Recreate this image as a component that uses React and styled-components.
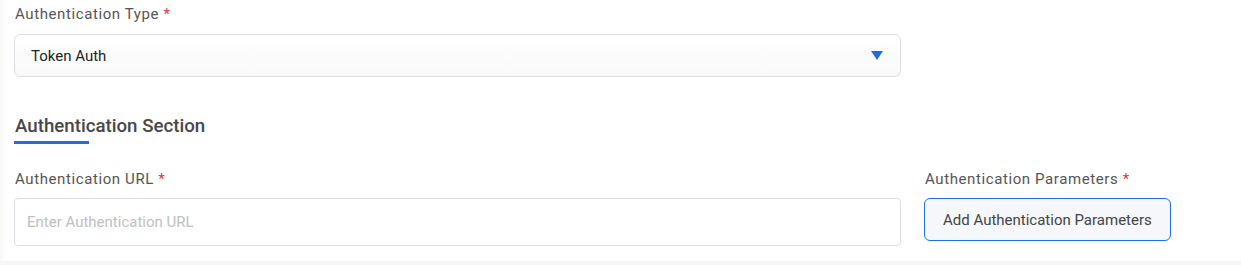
import React from 'react';
import styled, { createGlobalStyle } from 'styled-components';

const GlobalStyle = createGlobalStyle`
  html, body {
    margin: 0;
    padding: 0;
    background: #f6f6f6;
    font-family: Roboto, "Liberation Sans", sans-serif;
  }
`;

const Card = styled.div`
  background: #fff;
  height: 261px;
  box-sizing: border-box;
  padding: 4px 0 0 14px;
  box-shadow: inset 4px 0 4px -2px rgba(0, 0, 0, 0.04);
`;

const Field = styled.div`
  display: flex;
  flex-direction: column;
  width: ${(p) => p.width || 'auto'};
`;

const Label = styled.label`
  font-size: 15px;
  color: #555;
  letter-spacing: 0.6px;
  line-height: 20px;
  padding-left: 1px;
  margin-bottom: ${(p) => p.$gap || 10}px;

  span {
    color: #e03b3b;
  }
`;

const Select = styled.div`
  height: 43px;
  box-sizing: border-box;
  border: 1px solid #dcdfe4;
  border-radius: 6px;
  background: linear-gradient(180deg, #fff 0%, #f9f9f9 100%);
  display: flex;
  align-items: center;
  justify-content: space-between;
  padding: 0 17px 0 16px;
  font-size: 15px;
  color: #222;
`;

const Arrow = styled.svg`
  width: 12px;
  height: 9px;
`;

const Section = styled.div`
  margin-top: 37px;
`;

const SectionTitle = styled.h3`
  margin: 0;
  font-size: 18.7px;
  font-weight: 500;
  color: #474747;
  line-height: 24px;
  padding-left: 1px;
`;

const Underline = styled.div`
  width: 75px;
  height: 3px;
  background: #1f6fe0;
  margin-top: 3px;
`;

const Row = styled.div`
  display: grid;
  grid-template-columns: 887px 1fr;
  column-gap: 23px;
  margin-top: 25px;
`;

const Input = styled.input`
  height: 48px;
  box-sizing: border-box;
  border: 1px solid #dcdfe4;
  border-radius: 4px;
  padding: 0 12px;
  font-family: inherit;
  font-size: 15px;
  color: #222;
  outline: none;

  &::placeholder {
    color: #c0c0c0;
  }
`;

const Button = styled.button`
  align-self: flex-start;
  height: 43px;
  padding: 0 18px;
  border: 1px solid #1f6fe0;
  border-radius: 6px;
  background: #f5f7fa;
  font-family: inherit;
  font-size: 15px;
  color: #444;
  cursor: pointer;
`;

export default function App() {
  return (
    <>
      <GlobalStyle />
      <Card>
        <Field width="887px">
          <Label>
            Authentication Type <span>*</span>
          </Label>
          <Select>
            Token Auth
            <Arrow viewBox="0 0 12 9">
              <path d="M0 0 H12 L6 9 Z" fill="#1a6ee8" />
            </Arrow>
          </Select>
        </Field>
        <Section>
          <SectionTitle>Authentication Section</SectionTitle>
          <Underline />
        </Section>
        <Row>
          <Field>
            <Label $gap={9}>
              Authentication URL <span>*</span>
            </Label>
            <Input placeholder="Enter Authentication URL" />
          </Field>
          <Field>
            <Label $gap={9}>
              Authentication Parameters <span>*</span>
            </Label>
            <Button>Add Authentication Parameters</Button>
          </Field>
        </Row>
      </Card>
    </>
  );
}
